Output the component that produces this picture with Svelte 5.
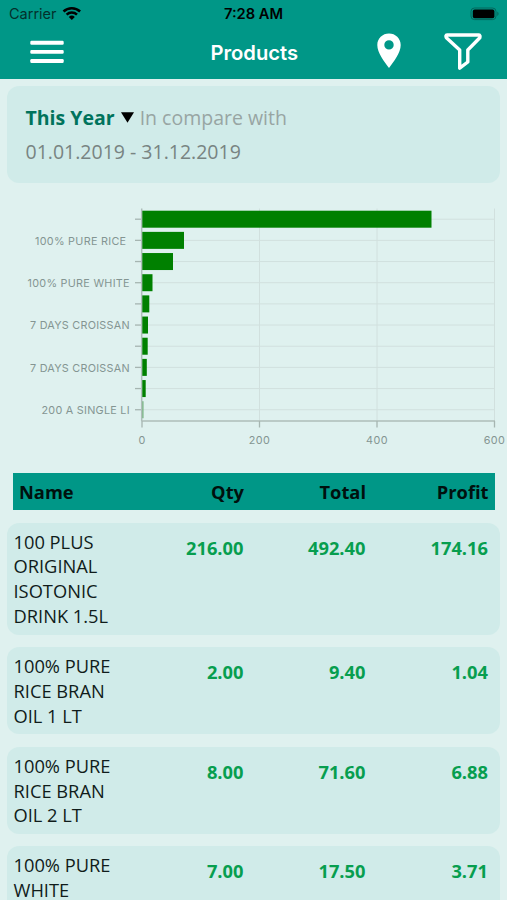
<script lang="ts">
	const bars = [
		{ label: '', end: 431.5 },
		{ label: '100% PURE RICE', end: 184, right: 126.5, width: 91.5 },
		{ label: '', end: 173 },
		{ label: '100% PURE WHITE', end: 152.5, right: 130, width: 102.5 },
		{ label: '', end: 149.3 },
		{ label: '7 DAYS CROISSAN', end: 148, right: 130, width: 100 },
		{ label: '', end: 147.7 },
		{ label: '7 DAYS CROISSAN', end: 146.8, right: 130, width: 100 },
		{ label: '', end: 145.7 },
		{ label: '200 A SINGLE LI', end: 143.5, right: 130, width: 88.5 }
	];
	const ticks = [0, 200, 400, 600];
	const tickX = (value: number) => 142 + value * 0.5875;
	const rowY = (i: number) => 36.2 + i * 21.17;

	const products = [
		{ name: ['100 PLUS', 'ORIGINAL', 'ISOTONIC', 'DRINK 1.5L'], qty: '216.00', total: '492.40', profit: '174.16' },
		{ name: ['100% PURE', 'RICE BRAN', 'OIL 1 LT'], qty: '2.00', total: '9.40', profit: '1.04' },
		{ name: ['100% PURE', 'RICE BRAN', 'OIL 2 LT'], qty: '8.00', total: '71.60', profit: '6.88' },
		{ name: ['100% PURE', 'WHITE'], qty: '7.00', total: '17.50', profit: '3.71' }
	];
</script>

<div class="screen">
	<header>
		<div class="status">
			<div class="carrier">
				<span>Carrier</span>
				<svg width="20" height="15" viewBox="0 0 20 15">
					<g fill="none" stroke="#000" stroke-width="2.5">
						<path d="M1.5 5.5a12 12 0 0 1 16.6 0" />
						<path d="M4.6 8.7a7.5 7.5 0 0 1 10.4 0" />
					</g>
					<path d="M6.8 11a4.4 4.4 0 0 1 6 0l-3 3z" />
				</svg>
			</div>
			<span class="time">7:28 AM</span>
			<svg class="battery" width="30" height="14" viewBox="0 0 30 14">
				<rect x="1" y="1" width="25" height="11.6" rx="3.5" fill="none" stroke="#04665c" />
				<rect x="2.8" y="2.6" width="21.6" height="8.6" rx="1.8" />
				<path d="M27.3 4.6c1.7.8 1.7 3.7 0 4.5z" fill="#04665c" />
			</svg>
		</div>
		<nav>
			<svg class="menu" width="34" height="24" viewBox="0 0 34 24" fill="#fff">
				<rect x="0.3" y="0.8" width="33.4" height="3.9" rx="1.2" />
				<rect x="0.3" y="9.9" width="33.4" height="3.9" rx="1.2" />
				<rect x="0.3" y="19" width="33.4" height="3.9" rx="1.2" />
			</svg>
			<h1>Products</h1>
			<div class="actions">
				<svg width="24" height="36" viewBox="0 0 24 36">
					<path
						fill="#fff"
						fill-rule="evenodd"
						d="M12 .5C5.5.5.3 5.4.3 12 .3 20 7.2 28.5 12 35c4.8-6.5 11.7-15 11.7-23C23.7 5.4 18.5.5 12 .5zM12 7.2a4.7 4.7 0 1 1 0 9.4a4.7 4.7 0 1 1 0-9.4z"
					/>
				</svg>
				<svg width="38" height="38" viewBox="0 0 38 38">
					<path
						fill="none"
						stroke="#fff"
						stroke-width="3.4"
						stroke-linejoin="round"
						d="M3.2 2H34.8Q36.5 2.2 35.8 4.8L23.8 17V29L15.7 35.2V17L2.4 4.8Q1.2 2.2 3.2 2z"
					/>
				</svg>
			</div>
		</nav>
	</header>

	<section class="period">
		<div class="line">
			<b>This Year</b>
			<svg width="13" height="11" viewBox="0 0 13 11"><path d="M0 .3h13L6.5 10.7z" /></svg>
			<span class="compare">In compare with</span>
		</div>
		<div class="line dates">01.01.2019 - 31.12.2019</div>
	</section>

	<svg class="chart" width="507" height="290" viewBox="0 0 507 290">
		{#each bars as bar, i}
			<line x1="142" x2="495" y1={rowY(i)} y2={rowY(i)} class="grid" />
		{/each}
		{#each ticks.slice(1) as tick}
			<line x1={tickX(tick)} x2={tickX(tick)} y1="25.5" y2="238" class="grid" />
		{/each}
		<path class="axis" d="M141.7 25.5V238M141.7 238H495" />
		{#each bars as bar, i}
			<line class="tick" x1="135" x2="141" y1={rowY(i)} y2={rowY(i)} />
			<rect x="142.3" y={rowY(i) - 8.5} width={bar.end - 142.3} height="17" fill={i === 9 ? '#6fae7a' : '#008000'} />
			{#if bar.label}
				<text x={bar.right} y={rowY(i) + 4.2} text-anchor="end" textLength={bar.width}>{bar.label}</text>
			{/if}
		{/each}
		{#each ticks as tick}
			<line class="tick" x1={tickX(tick)} x2={tickX(tick)} y1="238" y2="244.5" />
			<text x={tickX(tick)} y="260.6" text-anchor="middle">{tick}</text>
		{/each}
	</svg>

	<div class="columns head">
		<span>Name</span>
		<span>Qty</span>
		<span>Total</span>
		<span>Profit</span>
	</div>

	<div class="list">
		{#each products as product}
			<article class="columns">
				<div class="name">
					{#each product.name as part}
						<div>{part}</div>
					{/each}
				</div>
				<b>{product.qty}</b>
				<b>{product.total}</b>
				<b>{product.profit}</b>
			</article>
		{/each}
	</div>
</div>

<style>
	:global(body) {
		margin: 0;
		overflow: hidden;
	}
	.screen {
		width: 507px;
		height: 900px;
		overflow: hidden;
		background: #dff1ef;
		font-family: 'Open Sans', sans-serif;
		color: #101c1b;
	}
	svg {
		display: block;
		flex-shrink: 0;
	}
	header {
		height: 79px;
		background: #009787;
		font-family: Inter, sans-serif;
	}
	.status {
		display: grid;
		grid-template-columns: 1fr auto 1fr;
		align-items: center;
		height: 27px;
		padding: 0 7px 0 9px;
		font-size: 14.5px;
		color: #000;
	}
	.carrier {
		display: flex;
		align-items: center;
		gap: 5px;
	}
	.carrier span {
		color: #03302c;
	}
	.time {
		margin-left: -2px;
		font-size: 14.7px;
		font-weight: 600;
	}
	.battery {
		justify-self: end;
	}
	nav {
		display: grid;
		grid-template-columns: 1fr auto 1fr;
		align-items: center;
		height: 50px;
		padding: 0 25px 0 26.5px;
	}
	.menu {
		margin-left: 3.5px;
	}
	h1 {
		margin: 0;
		font-size: 20.2px;
		font-weight: 600;
		color: #fff;
	}
	.actions {
		display: flex;
		justify-content: flex-end;
		gap: 43px;
	}
	.period {
		height: 97px;
		box-sizing: border-box;
		margin: 7px 7px 0;
		padding: 14px 18.5px;
		border-radius: 12px;
		background: #d0ebe9;
		font-size: 19.5px;
	}
	.line {
		display: flex;
		align-items: center;
		height: 34px;
	}
	.line b {
		margin-right: 6px;
		color: #00735c;
	}
	.compare {
		margin-left: 6px;
		color: #98a5a3;
	}
	.dates {
		color: #788482;
	}
	.chart {
		font-family: Inter, sans-serif;
	}
	.chart text {
		font-size: 10.8px;
		fill: #849592;
		letter-spacing: 0.4px;
	}
	.grid {
		stroke: #d1e0de;
		stroke-width: 1;
	}
	.axis {
		fill: none;
		stroke: #aebdb9;
		stroke-width: 1.5;
	}
	.tick {
		stroke: #a6b5b1;
		stroke-width: 1.3;
	}
	.columns {
		display: grid;
		grid-template-columns: 109px 1fr 122px 122.5px;
		font-size: 18.3px;
		text-align: right;
	}
	.head {
		height: 37.5px;
		margin: -0.5px 12.5px 0 13px;
		padding: 0 6px;
		align-items: center;
		background: #009787;
		color: #00100e;
		font-weight: 700;
	}
	.head span:first-child,
	.name {
		text-align: left;
	}
	.list {
		display: flex;
		flex-direction: column;
		gap: 12.3px;
		margin: 12.5px 7px 0;
	}
	article {
		min-height: 74px;
		padding: 7px 12px 5.6px 6.5px;
		border-radius: 12px;
		background: #d0ebe9;
		line-height: 24.9px;
	}
	article b {
		padding-top: 6px;
		color: #079e4f;
	}
	.name {
		white-space: nowrap;
	}
</style>
